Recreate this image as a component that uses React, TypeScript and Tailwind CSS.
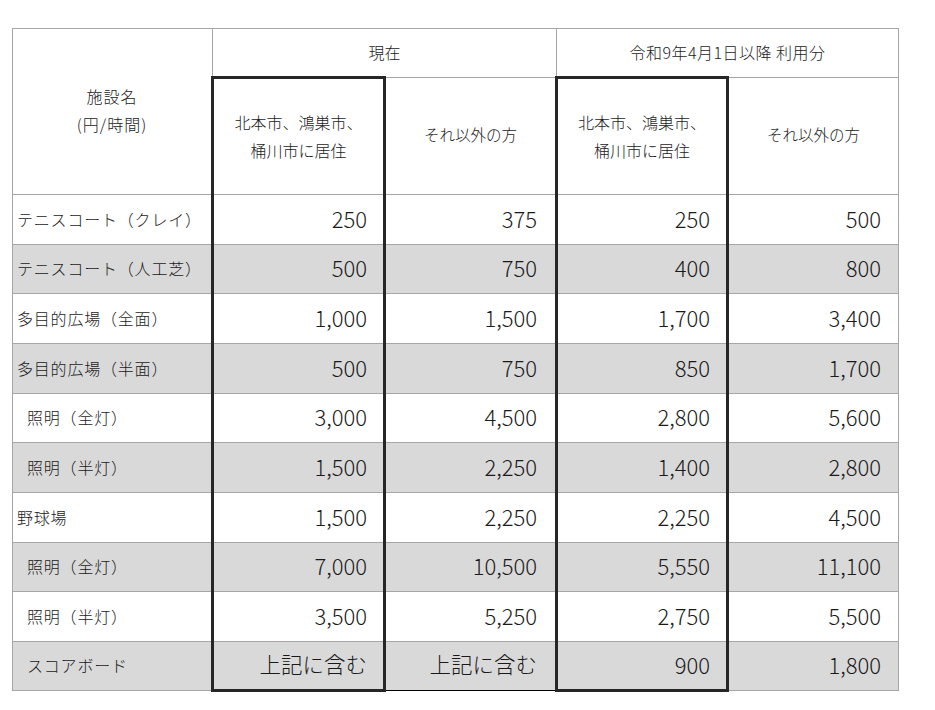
import React from "react";

type Row = { label: string; indent?: boolean; v: string[] };

const rows: Row[] = [
  { label: "テニスコート（クレイ）", v: ["250", "375", "250", "500"] },
  { label: "テニスコート（人工芝）", v: ["500", "750", "400", "800"] },
  { label: "多目的広場（全面）", v: ["1,000", "1,500", "1,700", "3,400"] },
  { label: "多目的広場（半面）", v: ["500", "750", "850", "1,700"] },
  { label: "照明（全灯）", indent: true, v: ["3,000", "4,500", "2,800", "5,600"] },
  { label: "照明（半灯）", indent: true, v: ["1,500", "2,250", "1,400", "2,800"] },
  { label: "野球場", v: ["1,500", "2,250", "2,250", "4,500"] },
  { label: "照明（全灯）", indent: true, v: ["7,000", "10,500", "5,550", "11,100"] },
  { label: "照明（半灯）", indent: true, v: ["3,500", "5,250", "2,750", "5,500"] },
  { label: "スコアボード", indent: true, v: ["上記に含む", "上記に含む", "900", "1,800"] },
];

const heights = ["h-[50px]", "h-[49px]", "h-[50px]", "h-[50px]", "h-[49px]", "h-[50px]", "h-[50px]", "h-[49px]", "h-[50px]", "h-[49px]"];

export default function App() {
  const font = "font-['Noto_Sans_CJK_JP','Noto_Sans',sans-serif]";
  return (
    <div className={`min-h-[710px] bg-white pt-[28px] pl-[12px] text-[#1a1a1a] font-light ${font}`}>
      <table className="border-collapse table-fixed w-[886px]">
        <colgroup>
          <col className="w-[200px]" />
          <col className="w-[172px]" />
          <col className="w-[172px]" />
          <col className="w-[171px]" />
          <col className="w-[171px]" />
        </colgroup>
        <thead>
          <tr className="h-[49px]">
            <td rowSpan={2} className="border border-[#a6a6a6] text-center align-middle text-[16px] leading-[28px] tracking-[1px] pb-[4px]">
              施設名
              <br />
              (円/時間)
            </td>
            <td colSpan={2} className="border border-[#a6a6a6] text-center align-middle text-[16px] pb-[2px]">
              現在
            </td>
            <td colSpan={2} className="border border-[#a6a6a6] text-center align-middle text-[16px] tracking-[0.5px] pb-[2px]">
              令和9年4月1日以降 利用分
            </td>
          </tr>
          <tr className="h-[117px]">
            <td className="border border-[#a6a6a6] border-l-[3px] border-r-[3px] border-t-[3px] border-l-[#262626] border-r-[#262626] border-t-[#262626] text-center align-middle text-[16px] leading-[28px] pb-[2px]">
              北本市、鴻巣市、
              <br />
              桶川市に居住
            </td>
            <td className="border border-[#a6a6a6] text-center align-middle text-[15.5px] pb-[2px]">それ以外の方</td>
            <td className="border border-[#a6a6a6] border-l-[3px] border-r-[3px] border-t-[3px] border-l-[#262626] border-r-[#262626] border-t-[#262626] text-center align-middle text-[16px] leading-[28px] pb-[2px]">
              北本市、鴻巣市、
              <br />
              桶川市に居住
            </td>
            <td className="border border-[#a6a6a6] text-center align-middle text-[15.5px] pb-[2px]">それ以外の方</td>
          </tr>
        </thead>
        <tbody>
          {rows.map((r, i) => {
            const gray = i % 2 === 1;
            const last = i === rows.length - 1;
            const bg = gray ? "bg-[#d9d9d9]" : "bg-white";
            return (
              <tr key={i} className={`${heights[i]} ${bg}`}>
                <td className={`border border-[#a6a6a6] align-middle text-[16px] tracking-[0.8px] whitespace-nowrap pb-[2px] ${r.indent ? "pl-[14px]" : "pl-[4px]"}`}>
                  {r.label}
                </td>
                <td
                  className={`border border-[#a6a6a6] border-l-[3px] border-r-[3px] border-l-[#262626] border-r-[#262626] text-right align-middle pr-[16px] pb-[3px] whitespace-nowrap ${
                    last ? "border-b-[3px] border-b-[#262626]" : ""
                  } ${r.v[0].includes("上") ? "text-[21.5px]" : "text-[22px]"}`}
                >
                  {r.v[0]}
                </td>
                <td
                  className={`border border-[#a6a6a6] text-right align-middle pr-[18px] pb-[3px] whitespace-nowrap ${
                    last ? "border-b-black" : ""
                  } ${r.v[1].includes("上") ? "text-[21.5px]" : "text-[22px]"}`}
                >
                  {r.v[1]}
                </td>
                <td
                  className={`border border-[#a6a6a6] border-l-[3px] border-r-[3px] border-l-[#262626] border-r-[#262626] text-right align-middle pr-[16px] pb-[3px] whitespace-nowrap text-[22px] ${
                    last ? "border-b-[3px] border-b-[#262626]" : ""
                  }`}
                >
                  {r.v[2]}
                </td>
                <td className="border border-[#a6a6a6] text-right align-middle pr-[17px] pb-[3px] whitespace-nowrap text-[22px]">
                  {r.v[3]}
                </td>
              </tr>
            );
          })}
        </tbody>
      </table>
    </div>
  );
}
